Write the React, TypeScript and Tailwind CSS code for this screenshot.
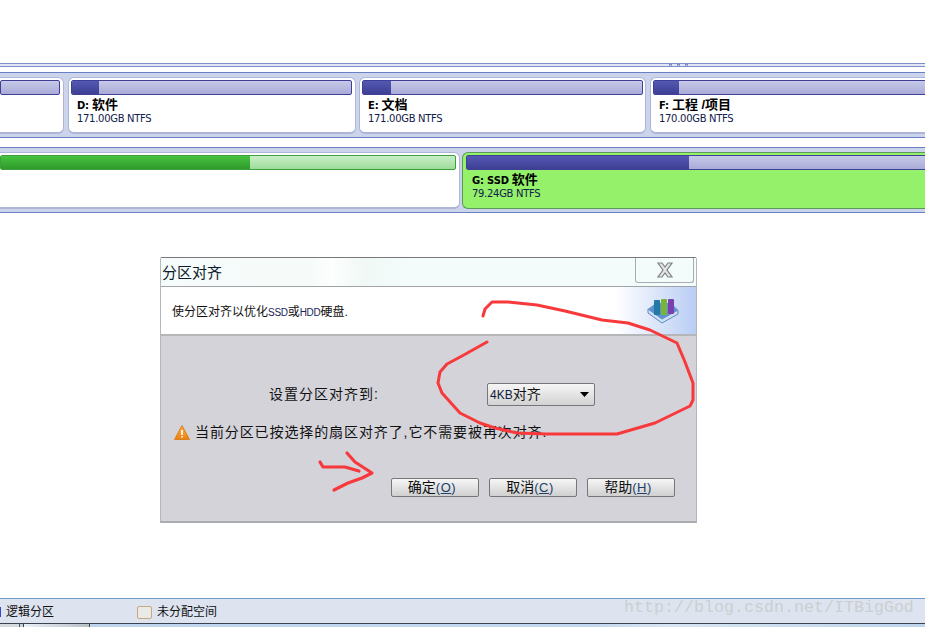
import React from "react";

const cjk = "font-['Liberation_Sans','Noto_Sans_CJK_SC',sans-serif]";

function Bar({ fill, green }: { fill: number; green?: boolean }) {
  return (
    <div
      className={
        "h-[15px] flex overflow-hidden rounded-[2px] border " +
        (green
          ? "border-[#3f9f3f] bg-[linear-gradient(#c9eec8,#9ddc9b)]"
          : "border-[#3f3f95] bg-[linear-gradient(#c7c9e8,#a9abd8)]")
      }
    >
      <div
        className={
          "h-full " +
          (green
            ? "bg-[linear-gradient(#45c33f,#2f9a2b)]"
            : "bg-[linear-gradient(#5558b3,#3d3f94)]")
        }
        style={{ width: fill }}
      />
    </div>
  );
}

function Label({ d, name, size }: { d: string; name: string; size: string }) {
  return (
    <div className="pl-[6px] text-black">
      <div className="h-[16px] mt-[2px] flex items-center gap-[3px] whitespace-nowrap">
        <span className="font-['DejaVu_Sans',sans-serif] text-[10px] font-bold tracking-[-0.2px]">{d}</span>
        <span className={cjk + " text-[13px] font-bold"}>{name}</span>
      </div>
      <div className="font-['DejaVu_Sans',sans-serif] text-[10px] leading-[12px] tracking-[-0.3px] text-[#10204a] whitespace-nowrap">{size}</div>
    </div>
  );
}

function TopCard({ cls, fill, d, name, size }: { cls: string; fill: number; d?: string; name?: string; size?: string }) {
  return (
    <div className={"h-[57px] shrink-0 bg-white border border-[#aeb6d8] border-b-2 rounded-[6px] pl-[2px] pt-[2px] " + cls}>
      <Bar fill={fill} />
      {d && <Label d={d} name={name!} size={size!} />}
    </div>
  );
}

function Btn({ t, k }: { t: string; k: string }) {
  return (
    <div className="w-[88px] h-[19px] pr-[6px] rounded-[2px] border border-[#777] bg-[linear-gradient(#f6f6f6,#d0d0d0)] flex items-center justify-center text-[14px] leading-[17px] text-[#111] whitespace-nowrap">
      {t}
      <span className="text-[#20406a] text-[13px] tracking-[0.5px]">
        (<span className="underline">{k}</span>)
      </span>
    </div>
  );
}

export default function App() {
  return (
    <div className={"relative w-[925px] h-[627px] overflow-hidden bg-white flex flex-col " + cjk}>
      {/* splitter */}
      <div className="h-[4px] mt-[63px] border-y border-[#7f8fc8] bg-[#e3e7f5] flex justify-end items-center gap-[5px] pr-[237px]">
        <i className="w-[3px] h-[3px] border border-[#7f8fc8]" />
        <i className="w-[3px] h-[3px] border border-[#7f8fc8]" />
        <i className="w-[3px] h-[3px] border border-[#7f8fc8]" />
      </div>

      {/* disk 1 */}
      <div className="mt-[5px] h-[66px] border-y border-[#6a80c4] bg-[#ccd4ec] pt-[4px] flex gap-[3px]">
        <TopCard cls="w-[66px] -ml-[2px] rounded-l-none border-l-0 pr-[3px]" fill={0} />
        <TopCard cls="w-[288px] ml-[1px] pr-[3px]" fill={27} d="D:" name="软件" size="171.00GB NTFS" />
        <TopCard cls="w-[287px] pr-[2px]" fill={28} d="E:" name="文档" size="171.00GB NTFS" />
        <TopCard cls="flex-1 ml-[1px] -mr-[8px] rounded-r-none border-r-0" fill={25} d="F:" name="工程 /项目" size="170.00GB NTFS" />
      </div>

      {/* disk 2 */}
      <div className="mt-[9px] h-[66px] border-y border-[#6a80c4] bg-[#ccd4ec] pt-[4px] flex gap-[2px]">
        <div className="w-[460px] h-[57px] bg-white border border-[#aeb6d8] border-b-2 border-l-0 rounded-r-[6px] pt-[2px] pr-[3px]">
          <Bar green fill={249} />
        </div>
        <div className="flex-1 -mr-[8px] h-[57px] bg-[#95f06a] border border-[#5c9a5c] border-r-0 rounded-l-[6px] pl-[3px] pt-[2px]">
          <Bar fill={222} />
          <Label d="G: SSD" name="软件" size="79.24GB NTFS" />
        </div>
      </div>

      {/* dialog */}
      <div className="mt-[44px] ml-[160px] w-[537px] h-[266px] shrink-0 border border-[#a9adb0] border-t-[#777] border-l-[#b5b8ba] border-r-[#b5b8ba] border-b-2 rounded-t-[2px] bg-[#f4fcfb] flex flex-col">
        <div className="h-[29px] shrink-0 flex bg-[linear-gradient(90deg,#f6fcfb_0%,#f6fbfa_28%,#fdfefe_32%,#f0f8f6_38%,#f4fcfb_45%,#f4fcfb_100%)] border-b border-[#9fa3a6]">
          <div className="flex-1 pl-[1px] pt-[5px] text-[15px] leading-[20px] text-[#0b1a2a]">分区对齐</div>
          <div className="w-[59px] h-[25px] mr-[2px] border border-[#a6acb0] border-t-0 rounded-b-[3px] flex items-center justify-center">
            <svg width="18" height="16" viewBox="0 0 18 16">
              <path d="M2 1h4l3 4 3-4h4l-5 7 5 7h-4l-3-4-3 4H2l5-7z" fill="#e4e6e6" stroke="#7d8184" strokeWidth="1.2" />
            </svg>
          </div>
        </div>
        <div className="h-[49px] shrink-0 bg-[linear-gradient(90deg,#fff_0%,#fff_85%,#b9cdf4_100%)] flex items-center justify-between pl-[11px] pr-[17px] border-b-2 border-[#b4b6b8]">
          <div className="text-[12px] text-[#111] pt-[3px] whitespace-nowrap">
            使分区对齐以优化<span className="text-[#16265a] text-[10px] tracking-[-0.3px]">SSD</span>或<span className="text-[#16265a] text-[10px] tracking-[-0.3px]">HDD</span>硬盘.
          </div>
          <svg width="32" height="26" viewBox="0 0 32 26">
            <path d="M1 15 L15 25 L31 16 L31 12 L15 21 L1 11 Z" fill="#cfe0f4" stroke="#5f8ac0" strokeWidth="1" />
            <path d="M1 11 L9 5 L24 5 L31 12 L15 21 Z" fill="#5f93cf" />
            <rect x="7" y="2" width="6" height="15" rx="1" fill="#2378a8" />
            <rect x="14" y="1" width="6" height="16" rx="1" fill="#7ab33a" />
            <rect x="21" y="1" width="6" height="15" rx="1" fill="#7a3fb0" />
          </svg>
        </div>
        <div className="flex-1 bg-[#d4d3d9] flex flex-col">
          <div className="mt-[47px] flex items-center h-[23px]">
            <div className="ml-[108px] w-[218px] text-[14px] tracking-[1px] text-[#111]">设置分区对齐到:</div>
            <div className="w-[108px] h-[23px] rounded-[2px] border border-[#777] bg-[linear-gradient(#f6f6f6,#d2d2d2)] flex items-center justify-between pl-[2px] pr-[5px]">
              <span className="text-[14px] text-[#111] whitespace-nowrap"><span className="text-[12px] text-[#101c40]">4KB</span>对齐</span>
              <svg width="9" height="5" viewBox="0 0 9 5"><path d="M0 0h9L4.5 5z" fill="#000" /></svg>
            </div>
          </div>
          <div className="mt-[16px] ml-[13px] flex items-center gap-[5px] h-[20px] whitespace-nowrap">
            <svg width="16" height="15" viewBox="0 0 16 15">
              <defs>
                <linearGradient id="warn" x1="0" y1="0" x2="0" y2="1">
                  <stop offset="0" stopColor="#f9b04a" />
                  <stop offset="1" stopColor="#ee7f12" />
                </linearGradient>
              </defs>
              <path d="M8 .5 15.5 14.5H.5Z" fill="url(#warn)" stroke="#d8821c" strokeWidth="1" />
              <rect x="7.2" y="5" width="1.6" height="5" fill="#fff" />
              <rect x="7.2" y="11" width="1.6" height="1.6" fill="#fff" />
            </svg>
            <span className="text-[14px] text-[#111] tracking-[0.9px]">当前分区已按选择的扇区对齐了,它不需要被再次对齐.</span>
          </div>
          <div className="mt-[36px] flex gap-[10px] ml-[230px]">
            <Btn t="确定" k="O" />
            <Btn t="取消" k="C" />
            <Btn t="帮助" k="H" />
          </div>
        </div>
      </div>

      {/* legend */}
      <div className="mt-[75px] h-[25px] shrink-0 border-t border-[#6f9cc8] bg-[#dde4f0] flex items-center text-[12px] text-[#111] pt-[2px]">
        <i className="w-[1px] h-[10px] bg-[#3a46c8]" />
        <span className="ml-[5px]">逻辑分区</span>
        <i className="ml-[83px] w-[15px] h-[13px] rounded-[2px] border border-[#c9a880] bg-[#e9e9e6]" />
        <span className="ml-[5px]">未分配空间</span>
      </div>
      <div className="flex-1 border-t border-[#3a4250] bg-[linear-gradient(90deg,#bcd4ec,#c4d9ef_65%,#d7e5f3_72%,#bcd4ec)] flex">
        <i className="w-[20px] bg-[#d6dbe0] border-r border-[#555]" />
        <i className="ml-[3px] w-[67px] bg-[linear-gradient(90deg,#e8f0f6,#b9bfc6)] border-x border-[#444]" />
      </div>

      {/* watermark */}
      <div className="absolute left-[624px] top-[597px] font-['Liberation_Mono',monospace] text-[16.67px] leading-[22px] text-[#cbcfd1] whitespace-nowrap">
        http://blog.csdn.net/ITBigGod
      </div>

      {/* red annotations */}
      <svg className="absolute left-0 top-0 pointer-events-none" width="925" height="627" fill="none" stroke="#f8393c" strokeLinecap="round" strokeLinejoin="round">
        <path
          strokeWidth="3"
          d="M483 316 L485 309 L492 302 L508 302 L537 305 L565 311 L602 320 L628 323 L650 330 L677 343 L685 362 L693 383 L693 400 L690 406 L655 423 L617 434 L547 434 L517 433 L495 428 L480 423 L460 413 L442 393 L438 383 L440 372 L447 364 L462 356 L487 342"
        />
        <path strokeWidth="3.2" d="M320 462 L323 467 L345 467 L359 471 M347 453 L355 462 L372 473 L362 478 L348 483 L334 490" />
      </svg>
    </div>
  );
}
